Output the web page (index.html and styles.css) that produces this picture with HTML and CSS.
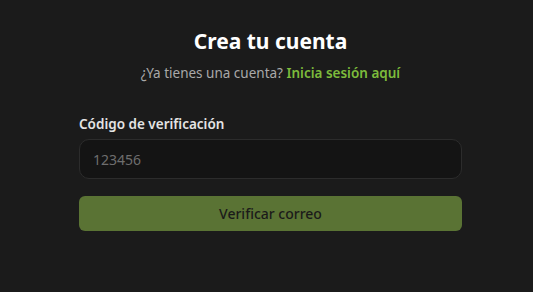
FILE: index.html
```html
<!DOCTYPE html>
<html>
<head>
  <title>Crea tu cuenta</title>
  <link rel="stylesheet" href="styles.css">
</head>
<body>
  <div class="container">
    <div class="header">
      <h1>Crea tu cuenta</h1>
      <p class="subtitle">¿Ya tienes una cuenta? <a href="#" class="login-link">Inicia sesión aquí</a></p>
    </div>
    <form class="verify-form">
      <label for="codeInput">Código de verificación</label>
      <input type="text" id="codeInput" placeholder="123456" />
      <button type="submit">Verificar correo</button>
    </form>
  </div>
</body>
</html>
```

FILE: styles.css
```css
* {
  box-sizing: border-box;
  margin: 0;
  padding: 0;
}
body {
  width: 533px;
  height: 292px;
  padding-left: 8px;
  font-family: "Noto Sans", "Open Sans", sans-serif;
  background: #1b1b1b;
  color: #e6e6e6;
}
.container {
  width: 383px;
  margin: 0 auto;
  padding-top: 27px;
}
.header {
  text-align: center;
}
.header h1 {
  font-size: 21px;
  font-weight: 700;
  color: #ffffff;
  line-height: 28px;
}
.subtitle {
  margin-top: 8px;
  font-size: 13.5px;
  color: #a9a9a9;
  line-height: 20px;
}
.login-link {
  color: #7dbb3c;
  font-weight: 600;
  text-decoration: none;
}
.verify-form {
  margin-top: 31px;
  display: flex;
  flex-direction: column;
}
label {
  font-size: 13.5px;
  font-weight: 600;
  color: #e4e4e4;
  line-height: 20px;
  margin-bottom: 5px;
}
input {
  width: 100%;
  height: 40px;
  padding: 0 13px;
  background: #141414;
  border: 1px solid #2c2c2c;
  border-radius: 10px;
  font-family: inherit;
  font-size: 14px;
  color: #e6e6e6;
}
input::placeholder {
  color: #6e6e6e;
}
input:focus {
  outline: none;
}
button {
  margin-top: 17px;
  height: 35px;
  background: #5a7334;
  color: #1a1a1a;
  border: none;
  border-radius: 6px;
  font-family: inherit;
  font-size: 14px;
  font-weight: 500;
  cursor: pointer;
}
```
